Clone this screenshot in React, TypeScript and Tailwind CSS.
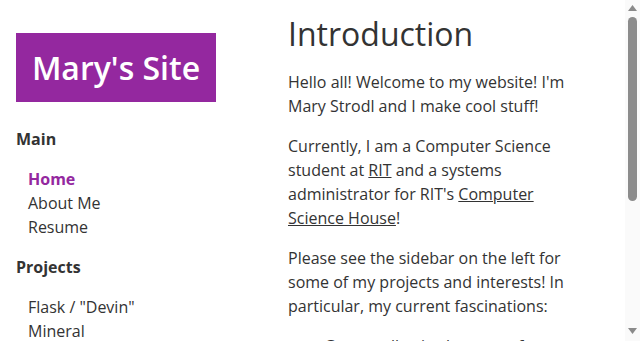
const purple = "text-[#94289f]";

function NavGroup({ title, items, active }: { title: string; items: string[]; active?: string }) {
  return (
    <div className="flex flex-col gap-4">
      <h2 className="text-base font-bold leading-6 text-[#333]">{title}</h2>
      <ul className="pl-3">
        {items.map((item) => (
          <li key={item} className={item === active ? `font-bold ${purple}` : "text-[#333]"}>
            {item}
          </li>
        ))}
      </ul>
    </div>
  );
}

// the page scrollbar, drawn since the headless browser hides the native one
function Scrollbar() {
  return (
    <div className="fixed right-0 top-0 flex h-[341px] w-[15px] flex-col items-center bg-[#fafafa]">
      <svg width="9" height="6" viewBox="0 0 9 6" className="mt-[5px]">
        <path d="M4.5 0 L9 6 L0 6 Z" fill="#8a8a8a" />
      </svg>
      <div className="mt-[6px] h-[184px] w-[9px] rounded-full bg-[#8c8c8c]" />
      <svg width="9" height="6" viewBox="0 0 9 6" className="mb-[7px] mt-auto">
        <path d="M0 0 L9 0 L4.5 6 Z" fill="#8a8a8a" />
      </svg>
    </div>
  );
}

export default function App() {
  return (
    <div className="h-[341px] overflow-hidden bg-white text-base leading-6 text-[#333] font-['Open_Sans',sans-serif]">
      <div className="flex">
        <aside className="flex w-[288px] shrink-0 flex-col gap-4 pl-4 pt-[33px]">
          <div className="mb-[9px] flex h-[69px] w-[200px] items-center justify-center bg-[#94289f]">
            <span className="text-[32px] font-semibold leading-none text-white">Mary's Site</span>
          </div>
          <NavGroup title="Main" items={["Home", "About Me", "Resume"]} active="Home" />
          <NavGroup title="Projects" items={['Flask / "Devin"', "Mineral", "Homelab", "Dotfiles"]} />
        </aside>

        <main className="w-[300px] pt-3">
          <h1 className="mb-[14px] text-[32px] font-normal leading-[44px] text-[#333]">Introduction</h1>
          <div className="flex flex-col gap-4">
            <p>Hello all! Welcome to my website! I'm Mary Strodl and I make cool stuff!</p>
            <p>
              Currently, I am a Computer Science student at <a className="underline">RIT</a> and a systems
              administrator for RIT's <a className="underline">Computer Science House</a>!
            </p>
            <p>
              Please see the sidebar on the left for some of my projects and interests! In particular, my current
              fascinations:
            </p>
            <ul className="list-disc pl-9">
              <li>Go, a really nice language for writing tools</li>
              <li>Self-hosting all the things</li>
              <li>Linux and open source software</li>
            </ul>
          </div>
        </main>
      </div>
      <Scrollbar />
    </div>
  );
}
